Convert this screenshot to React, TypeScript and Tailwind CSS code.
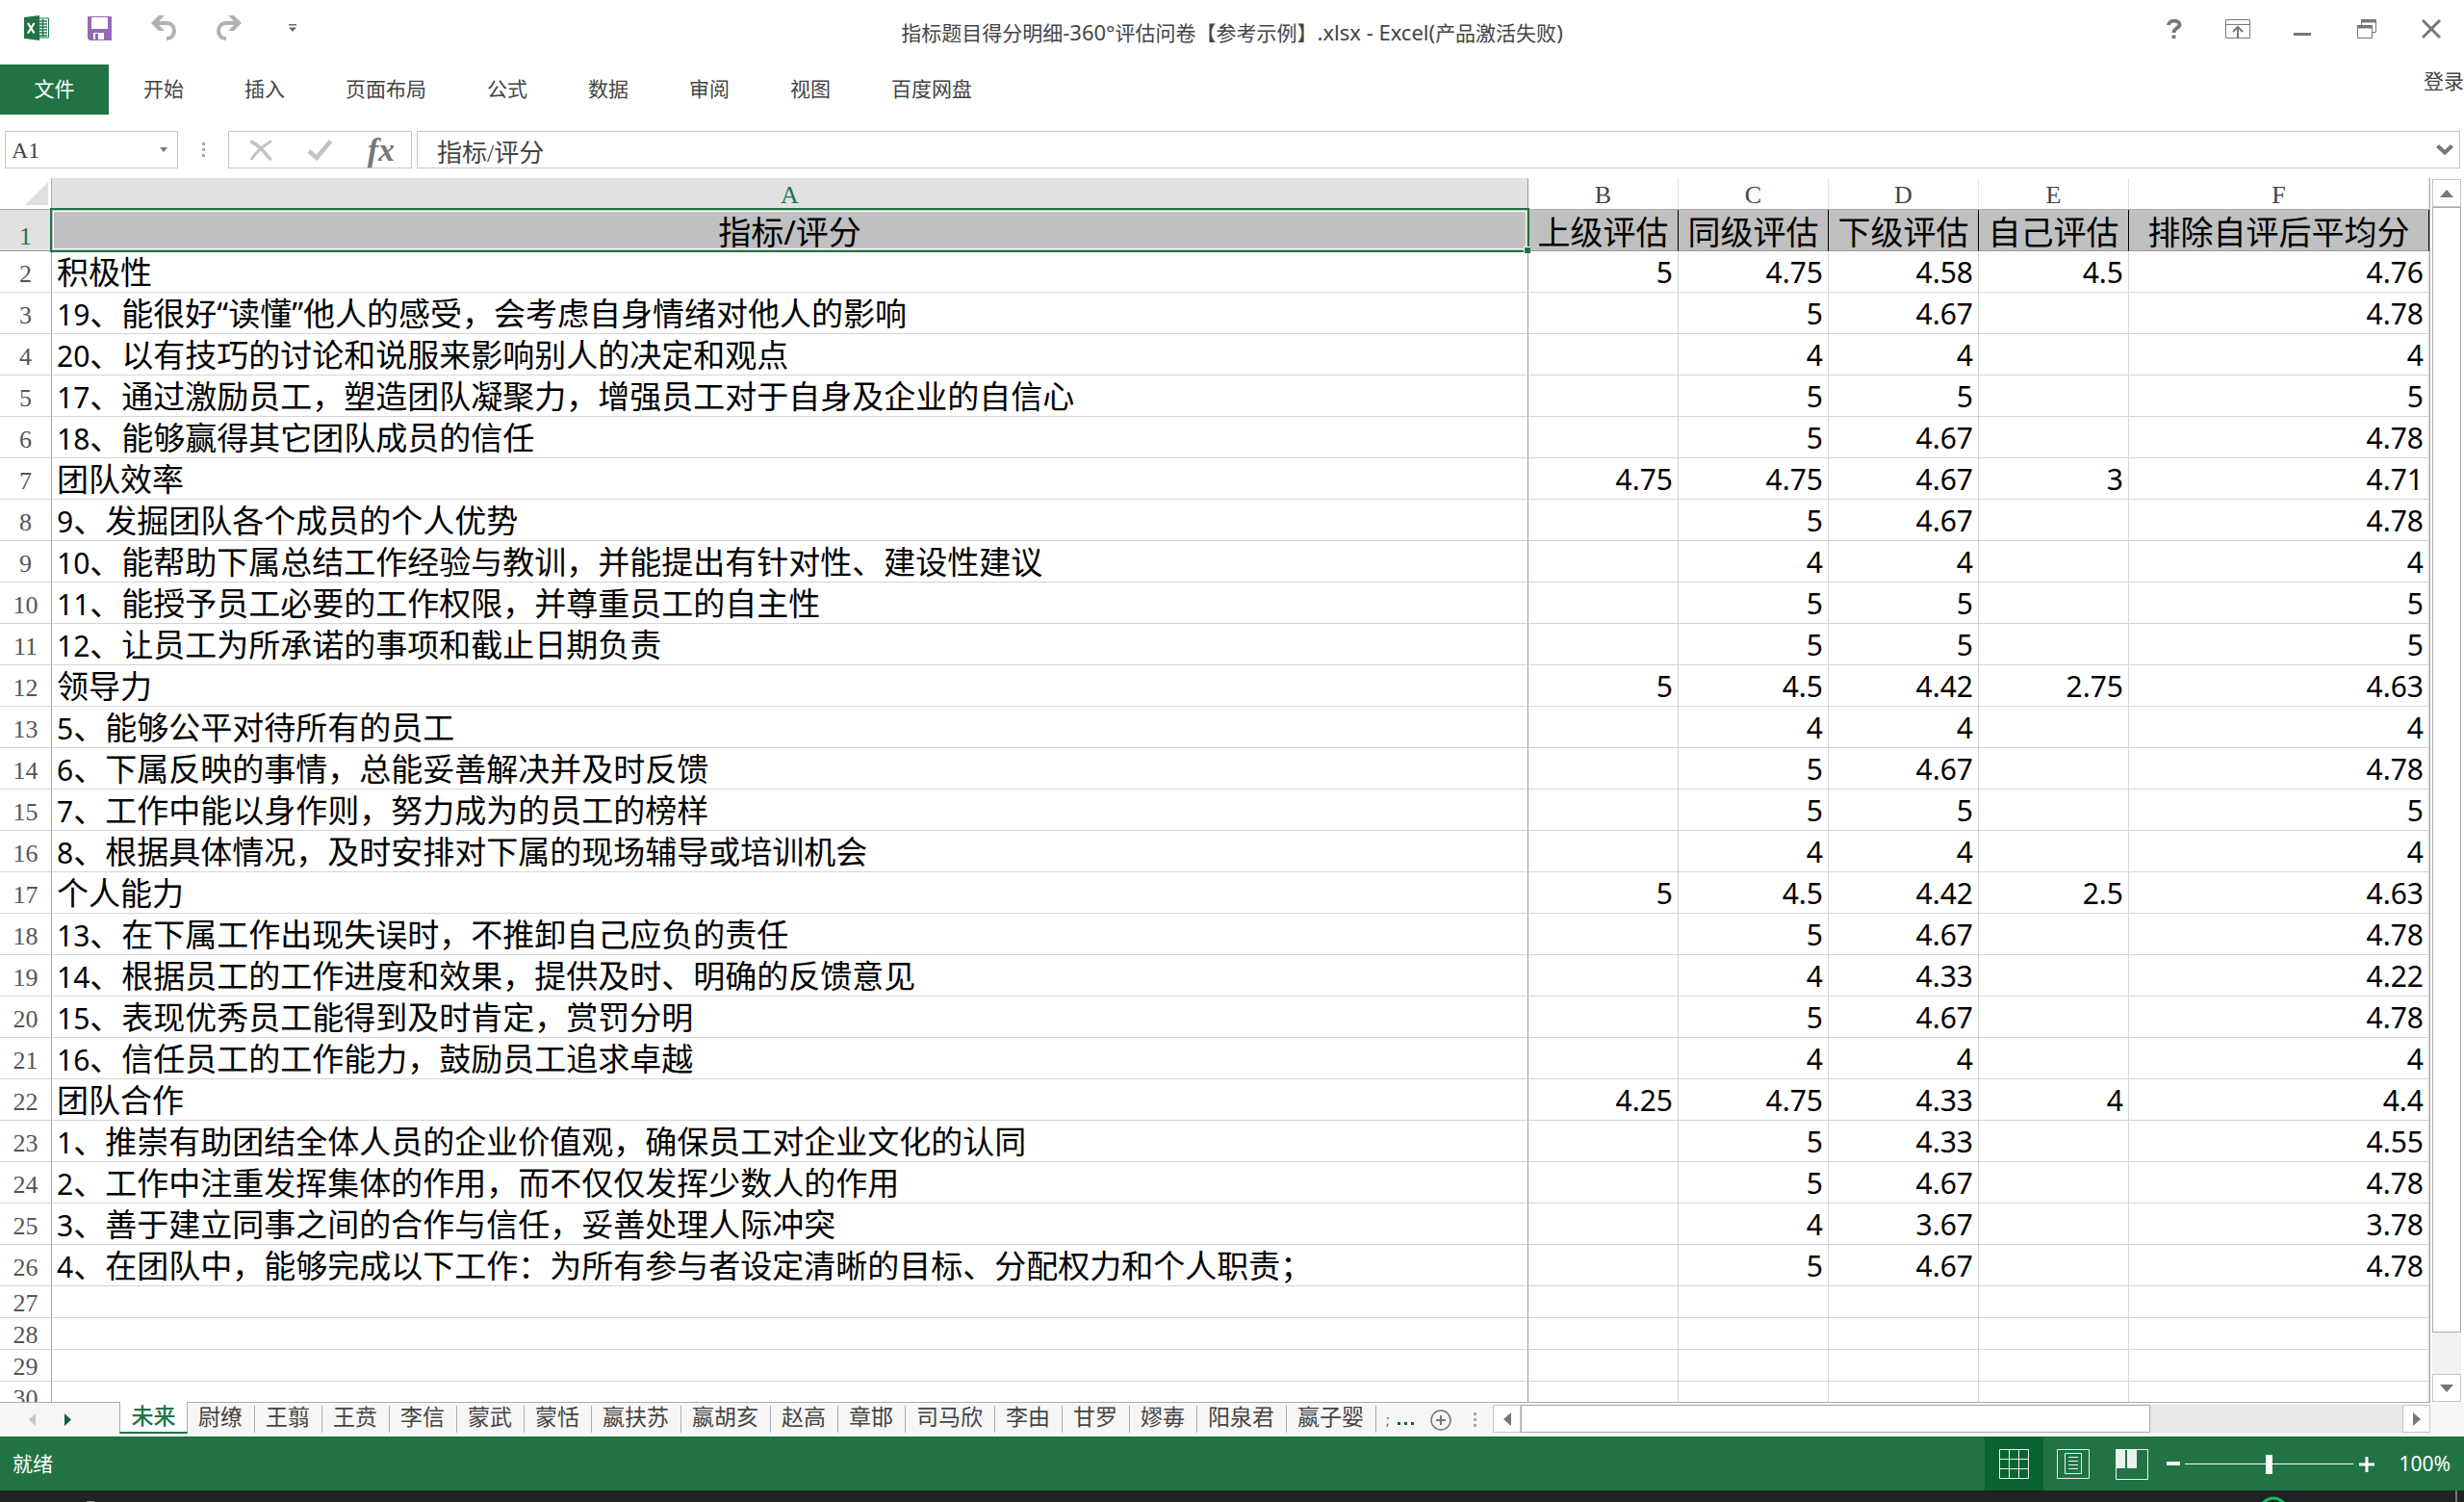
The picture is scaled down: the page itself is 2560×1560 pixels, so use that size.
import React from "react";

type Row = { label: string; values: string[] };

const columns = ["A", "B", "C", "D", "E", "F"];
const headings = ["指标/评分", "上级评估", "同级评估", "下级评估", "自己评估", "排除自评后平均分"];

const rows: Row[] = [
  { label: "积极性", values: ["5", "4.75", "4.58", "4.5", "4.76"] },
  { label: "19、能很好“读懂”他人的感受，会考虑自身情绪对他人的影响", values: ["", "5", "4.67", "", "4.78"] },
  { label: "20、以有技巧的讨论和说服来影响别人的决定和观点", values: ["", "4", "4", "", "4"] },
  { label: "17、通过激励员工，塑造团队凝聚力，增强员工对于自身及企业的自信心", values: ["", "5", "5", "", "5"] },
  { label: "18、能够赢得其它团队成员的信任", values: ["", "5", "4.67", "", "4.78"] },
  { label: "团队效率", values: ["4.75", "4.75", "4.67", "3", "4.71"] },
  { label: "9、发掘团队各个成员的个人优势", values: ["", "5", "4.67", "", "4.78"] },
  { label: "10、能帮助下属总结工作经验与教训，并能提出有针对性、建设性建议", values: ["", "4", "4", "", "4"] },
  { label: "11、能授予员工必要的工作权限，并尊重员工的自主性", values: ["", "5", "5", "", "5"] },
  { label: "12、让员工为所承诺的事项和截止日期负责", values: ["", "5", "5", "", "5"] },
  { label: "领导力", values: ["5", "4.5", "4.42", "2.75", "4.63"] },
  { label: "5、能够公平对待所有的员工", values: ["", "4", "4", "", "4"] },
  { label: "6、下属反映的事情，总能妥善解决并及时反馈", values: ["", "5", "4.67", "", "4.78"] },
  { label: "7、工作中能以身作则，努力成为的员工的榜样", values: ["", "5", "5", "", "5"] },
  { label: "8、根据具体情况，及时安排对下属的现场辅导或培训机会", values: ["", "4", "4", "", "4"] },
  { label: "个人能力", values: ["5", "4.5", "4.42", "2.5", "4.63"] },
  { label: "13、在下属工作出现失误时，不推卸自己应负的责任", values: ["", "5", "4.67", "", "4.78"] },
  { label: "14、根据员工的工作进度和效果，提供及时、明确的反馈意见", values: ["", "4", "4.33", "", "4.22"] },
  { label: "15、表现优秀员工能得到及时肯定，赏罚分明", values: ["", "5", "4.67", "", "4.78"] },
  { label: "16、信任员工的工作能力，鼓励员工追求卓越", values: ["", "4", "4", "", "4"] },
  { label: "团队合作", values: ["4.25", "4.75", "4.33", "4", "4.4"] },
  { label: "1、推崇有助团结全体人员的企业价值观，确保员工对企业文化的认同", values: ["", "5", "4.33", "", "4.55"] },
  { label: "2、工作中注重发挥集体的作用，而不仅仅发挥少数人的作用", values: ["", "5", "4.67", "", "4.78"] },
  { label: "3、善于建立同事之间的合作与信任，妥善处理人际冲突", values: ["", "4", "3.67", "", "3.78"] },
  { label: "4、在团队中，能够完成以下工作：为所有参与者设定清晰的目标、分配权力和个人职责；", values: ["", "5", "4.67", "", "4.78"] },
];

const emptyRows = [27, 28, 29, 30];

const ribbonTabs = ["开始", "插入", "页面布局", "公式", "数据", "审阅", "视图", "百度网盘"];

const sheets = [
  "尉缭", "王翦", "王贲", "李信", "蒙武", "蒙恬", "嬴扶苏", "嬴胡亥", "赵高",
  "章邯", "司马欣", "李由", "甘罗", "嫪毐", "阳泉君", "嬴子婴",
];

function QuickAccess() {
  return (
    <div className="flex items-center">
      <svg width="26" height="26" viewBox="0 0 26 26" className="mr-[40px]" role="img" aria-label="Excel">
        <path d="M15 3h10.500v20H15z" fill="#fff" stroke="#217346" />
        <path d="M15 6h9M15 9h9M15 12h9M15 15h9M15 18h9M15 21h9M19.500 4v18" stroke="#217346" strokeWidth="1.300" />
        <path d="M0 2 16 0v26L0 24z" fill="#217346" />
        <path d="m4 8 6.500 10.500M10.500 8 4 18.500" stroke="#fff" strokeWidth="2.200" />
      </svg>
      <button aria-label="保存" className="mr-[41px]">
        <svg width="25" height="25" viewBox="0 0 25 25">
          <path d="M0 1q0-1 1-1h23q1 0 1 1v23q0 1-1 1H2l-2-2z" fill="#9668b8" />
          <path d="M4 1h17v12H4z" fill="#fff" />
          <path d="M6 17h11v7h-6v-6H8v6H6z" fill="#fff" />
        </svg>
      </button>
      <button aria-label="撤消" className="mr-[42px]">
        <svg width="26" height="26" viewBox="0 0 26 26" fill="#b1b1b1">
          <path d="M8 0h6L8 6h9a9 10 0 0 1 0 20h-1v-4h1a5 6 0 0 0 0-12H8l6 6H8L0 8z" />
        </svg>
      </button>
      <button aria-label="恢复" className="mr-[49px]">
        <svg width="26" height="26" viewBox="0 0 26 26" fill="#b1b1b1">
          <path d="M18 0h-6l6 6H9a9 10 0 0 0 0 20h1v-4H9a5 6 0 0 1 0-12h9l-6 6h6l8-8z" />
        </svg>
      </button>
      <button aria-label="自定义快速访问工具栏">
        <svg width="8" height="8" viewBox="0 0 8 8" fill="#666">
          <path d="M0 0h8v1.500H0zM0 3.500h8L4 8z" />
        </svg>
      </button>
    </div>
  );
}

function WindowButtons() {
  return (
    <div className="flex items-center text-[#777]">
      <button aria-label="帮助" className="mr-[45px]">
        <svg width="16" height="20" viewBox="0 0 16 20" fill="none" stroke="currentColor" strokeWidth="3.800">
          <path d="M2 6C2 .3 13.500.3 13.500 5.500c0 4-6 3.500-6 8.500" />
          <path d="M7.500 16.500V20" />
        </svg>
      </button>
      <button aria-label="功能区显示选项" className="mr-[45px]">
        <svg width="26" height="20" viewBox="0 0 26 20" fill="none" stroke="currentColor">
          <path d="M.5.5h25v19H.5zM.5 5.500h25" />
          <path d="M13 19V8M8 13l5-5 5 5" strokeWidth="2" />
        </svg>
      </button>
      <button aria-label="最小化" className="mr-[48px]">
        <svg width="18" height="20" viewBox="0 0 18 20" fill="currentColor">
          <path d="M0 14h18v3H0z" />
        </svg>
      </button>
      <button aria-label="向下还原" className="mr-[47px]">
        <svg width="20" height="20" viewBox="0 0 20 20" fill="none" stroke="currentColor">
          <path d="M4.500 6V.5h15v13H16" />
          <path d="M4 2h16" strokeWidth="3" />
          <path d="M.5 6.500h15v13H.5z" fill="#fff" />
          <path d="M0 8h16" strokeWidth="3" />
        </svg>
      </button>
      <button aria-label="关闭">
        <svg width="20" height="20" viewBox="0 0 20 20" stroke="currentColor" strokeWidth="3">
          <path d="m1 1 18 18M19 1 1 19" />
        </svg>
      </button>
    </div>
  );
}

function GripDots() {
  return (
    <svg width="3" height="15" viewBox="0 0 3 15" fill="#aaa">
      <path d="M0 0h3v3H0zM0 6h3v3H0zM0 12h3v3H0z" />
    </svg>
  );
}

function FormulaBar() {
  return (
    <div className="flex pt-[17px] pr-[4px] pb-[10px] pl-[5px] font-['Liberation_Serif','Noto_Sans_CJK_SC',serif] text-[26px] text-[#444]">
      <div className="flex h-[39px] w-[180px] items-center border border-[#c6c6c6] pr-[10px] pl-[6px]">
        <input aria-label="名称框" defaultValue="A1" className="h-full min-w-0 flex-1 pt-[2px] text-[24px] outline-none" />
        <button aria-label="名称列表">
          <svg width="8" height="5" viewBox="0 0 8 5" fill="#777">
            <path d="M0 0h8L4 5z" />
          </svg>
        </button>
      </div>
      <div className="flex w-[52px] items-center justify-center">
        <GripDots />
      </div>
      <div className="flex h-[39px] w-[191px] items-center justify-between border border-[#c6c6c6] pr-[17px] pl-[21px]">
        <button aria-label="取消">
          <svg width="24" height="22" viewBox="0 0 24 22" fill="none" stroke="#c3c3c3" strokeLinecap="round">
            <path d="M2.500 2.500C9 5 16 13 21.500 20" strokeWidth="3.600" />
            <path d="M22 2C14 7 7 13 2.500 20" strokeWidth="2.800" />
          </svg>
        </button>
        <button aria-label="输入">
          <svg width="26" height="22" viewBox="0 0 26 22" fill="none" stroke="#c3c3c3" strokeWidth="4.500">
            <path d="m2 12 8 7L24.500 1.500" />
          </svg>
        </button>
        <button aria-label="插入函数" className="h-[37px] font-['Liberation_Serif',serif] text-[34px] leading-[32px] font-bold text-[#777] italic">
          fx
        </button>
      </div>
      <div className="ml-[5px] flex h-[39px] min-w-0 flex-1 items-center border border-[#c6c6c6] pr-[6px] pl-[20px]">
        <input aria-label="编辑栏" defaultValue="指标/评分" className="h-full min-w-0 flex-1 pt-[2px] outline-none" />
        <button aria-label="展开编辑栏">
          <svg width="18" height="12" viewBox="0 0 18 12" fill="none" stroke="#777" strokeWidth="4">
            <path d="m1.500 1.500 7.500 7 7.500-7" />
          </svg>
        </button>
      </div>
    </div>
  );
}

function CellLabel({ text }: { text: string }) {
  const match = text.match(/^(\d+)(.*)$/);
  if (!match) return <>{text}</>;
  return (
    <>
      <span className="text-[30px]">{match[1]}</span>
      {match[2]}
    </>
  );
}

function Grid() {
  return (
    <table className="w-full table-fixed border-separate border-spacing-0 whitespace-nowrap text-black">
      <colgroup>
        <col className="w-[54px]" />
        <col />
        <col className="w-[156px]" />
        <col className="w-[156px]" />
        <col className="w-[156px]" />
        <col className="w-[156px]" />
        <col className="w-[312px]" />
      </colgroup>
      <thead>
        <tr className="font-['Liberation_Serif',serif] text-[26px] leading-[28px] text-[#444]">
          <th className="h-[33px] border-r border-b border-[#ababab] p-0">
            <svg width="24" height="24" viewBox="0 0 24 24" className="mr-[3px] ml-auto block">
              <path d="M24 0v24H0z" fill="#dfdfdf" />
            </svg>
          </th>
          {columns.map((c, i) => (
            <th
              key={c}
              scope="col"
              className={
                i === 0
                  ? "border-r border-b border-[#9b9b9b] bg-[#e1e1e1] p-0 pt-[4px] font-normal text-[#217346]"
                  : "border-r border-b border-r-[#e1e1e1] border-b-[#ababab] p-0 pt-[4px] font-normal"
              }
            >
              {c}
            </th>
          ))}
        </tr>
      </thead>
      <tbody>
        <tr className="text-[34px] leading-[38px]">
          <th className="h-[43px] border-r border-b border-[#9b9b9b] bg-[#e1e1e1] p-0 align-bottom font-['Liberation_Serif',serif] text-[26px] leading-[28px] font-normal text-[#217346]">
            1
          </th>
          {headings.map((h, i) => (
            <td
              key={h}
              className={
                i === 0
                  ? "relative border-r border-b border-[#9b9b9b] bg-[#c0c0c0] p-0 pt-[3px] text-center"
                  : "border-r border-b border-r-black border-b-[#9b9b9b] bg-[#c0c0c0] p-0 pt-[3px] text-center"
              }
            >
              {h}
              {i === 0 && (
                <>
                  <div className="absolute -inset-x-[2px] -top-[2px] -bottom-[2px] border-2 border-[#217346] p-px">
                    <div className="h-full border border-white" />
                  </div>
                  <div className="absolute -right-[3px] -bottom-[3px] size-[7px] border-t border-l border-white bg-[#217346]" />
                </>
              )}
            </td>
          ))}
        </tr>
        {rows.map((row, r) => (
          <tr key={row.label} className="text-[33px] leading-[38px]">
            <th
              scope="row"
              className="h-[43px] border-r border-b border-r-[#ababab] border-b-[#d4d4d4] p-0 pb-[4px] align-bottom font-['Liberation_Serif',serif] text-[26px] leading-[28px] font-normal text-[#555]"
            >
              {r + 2}
            </th>
            <td className="border-r border-b border-r-[#9b9b9b] border-b-[#d4d4d4] p-0 pt-[2px] pl-[5px]">
              <CellLabel text={row.label} />
            </td>
            {row.values.map((v, i) => (
              <td key={i} className="border-r border-b border-[#d4d4d4] p-0 pt-[2px] pr-[5px] text-right text-[30px]">
                {v}
              </td>
            ))}
          </tr>
        ))}
        {emptyRows.map((n) => (
          <tr key={n}>
            <th
              scope="row"
              className="h-[33px] border-r border-b border-r-[#ababab] border-b-[#d4d4d4] p-0 align-bottom font-['Liberation_Serif',serif] text-[26px] leading-[28px] font-normal text-[#555]"
            >
              {n}
            </th>
            <td className="border-r border-b border-r-[#9b9b9b] border-b-[#d4d4d4] p-0" />
            {columns.slice(1).map((c) => (
              <td key={c} className="border-r border-b border-[#d4d4d4] p-0" />
            ))}
          </tr>
        ))}
      </tbody>
    </table>
  );
}

function VerticalScroll() {
  return (
    <div className="mt-px mr-[3px] ml-[2px] flex w-[30px] flex-col bg-[#f1f1f1]">
      <button aria-label="向上滚动" className="flex h-[29px] items-center justify-center border border-[#c6c6c6] bg-white">
        <svg width="14" height="8" viewBox="0 0 14 8" fill="#777">
          <path d="M7 0l7 8H0z" />
        </svg>
      </button>
      <div className="flex-[1170] border border-[#ababab] bg-white" />
      <div className="flex-[43]" />
      <button aria-label="向下滚动" className="flex h-[29px] items-center justify-center border border-[#c6c6c6] bg-white">
        <svg width="14" height="8" viewBox="0 0 14 8" fill="#777">
          <path d="M0 0h14L7 8z" />
        </svg>
      </button>
    </div>
  );
}

function SheetBar() {
  return (
    <div className="flex h-[36px] bg-[#f6f6f6] text-[23px] leading-[28px] text-[#444]">
      <div className="flex w-[124px] shrink-0 items-center border-t border-[#ababab] pl-[30px]">
        <button aria-label="上一张工作表" className="mr-[30px]">
          <svg width="7" height="13" viewBox="0 0 7 13" fill="#c6c6c6">
            <path d="M7 0v13L0 6.500z" />
          </svg>
        </button>
        <button aria-label="下一张工作表">
          <svg width="7" height="13" viewBox="0 0 7 13" fill="#0a6332">
            <path d="M0 0v13l7-6.500z" />
          </svg>
        </button>
      </div>
      <button className="h-[33px] w-[71px] shrink-0 border-x border-b-2 border-x-[#ababab] border-b-[#217346] bg-white pb-[3px] font-medium text-[#217346]">
        未来
      </button>
      <div className="flex shrink-0 border-t border-[#ababab]">
        {sheets.map((s) => (
          <button key={s} className="mt-[3px] mb-[4px] border-r border-[#ababab] pr-[12px] pb-[6px] pl-[11px] leading-[22px]">
            {s}
          </button>
        ))}
      </div>
      <div className="flex flex-1 items-center border-t border-[#ababab] pl-[10px]">
        <span className="text-[14px] leading-none text-[#666]">;</span>
        <button aria-label="更多工作表" className="ml-[8px]">
          <svg width="18" height="20" viewBox="0 0 18 20" fill="#0a6332">
            <path d="M0 12h3v3H0zM7 12h3v3H7zM14 12h3v3h-3z" />
          </svg>
        </button>
        <button aria-label="新工作表" className="ml-[16px]">
          <svg width="22" height="22" viewBox="0 0 22 22" fill="none" stroke="#777" strokeWidth="1.500">
            <circle cx="11" cy="11" r="10" />
            <path d="M11 6v10M6 11h10" strokeWidth="2" />
          </svg>
        </button>
        <span className="ml-[23px]">
          <GripDots />
        </span>
      </div>
      <div className="flex h-[36px] w-[974px] border-t border-[#ababab] pt-[2px] pb-[4px]">
        <button aria-label="向左滚动" className="flex w-[29px] items-center justify-center border border-[#c6c6c6] bg-white">
          <svg width="8" height="14" viewBox="0 0 8 14" fill="#777">
            <path d="M8 0v14L0 7z" />
          </svg>
        </button>
        <div className="flex-[653] border border-[#ababab] bg-white" />
        <div className="flex-[263] bg-[#e8e8e8]" />
        <button aria-label="向右滚动" className="flex w-[29px] items-center justify-center border border-[#c6c6c6] bg-white">
          <svg width="8" height="14" viewBox="0 0 8 14" fill="#777">
            <path d="M0 0v14l8-7z" />
          </svg>
        </button>
      </div>
      <div className="w-[35px] shrink-0" />
    </div>
  );
}

function StatusBar() {
  return (
    <div className="flex h-[56px] items-center border-t border-[#1c6339] bg-[#217346] pr-[14px] pl-[13px] text-[21px] text-white">
      <span className="flex-1">就绪</span>
      <button aria-label="普通" className="flex h-[55px] w-[61px] items-center justify-center bg-[#0a6332]">
        <svg width="31" height="31" viewBox="0 0 31 31" fill="none" stroke="#e9f3ec">
          <path d="M.5.5h30v30H.5zM10.500 0v31M20.500 0v31M0 10.500h31M0 20.500h31" />
        </svg>
      </button>
      <button aria-label="页面布局视图" className="flex w-[61px] items-center justify-center">
        <svg width="34" height="31" viewBox="0 0 34 31" fill="none" stroke="#e9f3ec">
          <path d="M.5.5h33v30H.5zM8.500 4.500h17v21h-17zM12 8.500h10M12 12.500h10M12 16.500h10M12 20.500h10" />
        </svg>
      </button>
      <button aria-label="分页预览" className="flex w-[61px] items-center justify-center">
        <svg width="34" height="32" viewBox="0 0 34 32" fill="none" stroke="#e9f3ec">
          <path d="M.5.5h33v31H.5z" />
          <path d="M0 0h10v20H0zM12 0h10v20H12z" fill="#e9f3ec" stroke="none" />
        </svg>
      </button>
      <button aria-label="缩小" className="mr-[5px] ml-[6px]">
        <svg width="14" height="16" viewBox="0 0 14 16" fill="#fff">
          <path d="M0 5h14v4H0z" />
        </svg>
      </button>
      <input
        type="range"
        aria-label="显示比例"
        min="10"
        max="190"
        defaultValue="100"
        className="h-[22px] w-[175px] appearance-none bg-[linear-gradient(#fff,#fff)] bg-[length:100%_1px] bg-center bg-no-repeat [&::-webkit-slider-thumb]:h-[20px] [&::-webkit-slider-thumb]:w-[7px] [&::-webkit-slider-thumb]:appearance-none [&::-webkit-slider-thumb]:bg-white"
      />
      <button aria-label="放大" className="ml-[6px]">
        <svg width="16" height="16" viewBox="0 0 16 16" fill="#fff">
          <path d="M0 6.500h16v3H0zM6.500 0h3v16h-3z" />
        </svg>
      </button>
      <span className="w-[79px] text-right">100%</span>
    </div>
  );
}

function TaskbarEdge() {
  return (
    <div className="flex h-[12px] items-end overflow-hidden bg-[#222]">
      <div className="ml-[90px] h-px w-[8px] bg-[#888]" />
      <div className="flex-1" />
      <svg width="30" height="6" viewBox="0 0 30 6" fill="none" stroke="#07c160" strokeWidth="3">
        <circle cx="15" cy="16" r="14" />
      </svg>
      <div className="ml-[174px] h-[12px] w-[2px] bg-[#777]" />
      <div className="w-[7px]" />
    </div>
  );
}

export default function App() {
  return (
    <div
      lang="zh-CN"
      className="flex h-screen flex-col overflow-hidden bg-white font-['Noto_Sans','Noto_Sans_CJK_SC',sans-serif]"
    >
      <header className="grid h-[67px] grid-cols-[1fr_auto_1fr] items-start text-[#444]">
        <div className="pt-[16px] pl-[25px]">
          <QuickAccess />
        </div>
        <h1 className="pt-[17px] text-[21px] leading-[32px]">
          指标题目得分明细<span className="text-[22px]">-360°</span>评估问卷【参考示例】
          <span className="text-[22px]">.xlsx - Excel(</span>产品激活失败<span className="text-[22px]">)</span>
        </h1>
        <div className="flex justify-end pt-[20px] pr-[24px]">
          <WindowButtons />
        </div>
      </header>
      <nav className="flex h-[52px] items-center text-[21px] text-[#444]">
        <button className="h-full w-[113px] bg-[#217346] text-white">文件</button>
        <div className="ml-[36px] flex gap-[63px]">
          {ribbonTabs.map((t) => (
            <button key={t}>{t}</button>
          ))}
        </div>
        <button className="mb-[16px] ml-auto">登录</button>
      </nav>
      <FormulaBar />
      <main className="flex min-h-0 flex-1">
        <div className="min-w-0 flex-1 overflow-hidden border-r border-[#ababab]">
          <Grid />
        </div>
        <VerticalScroll />
      </main>
      <SheetBar />
      <StatusBar />
      <TaskbarEdge />
    </div>
  );
}
